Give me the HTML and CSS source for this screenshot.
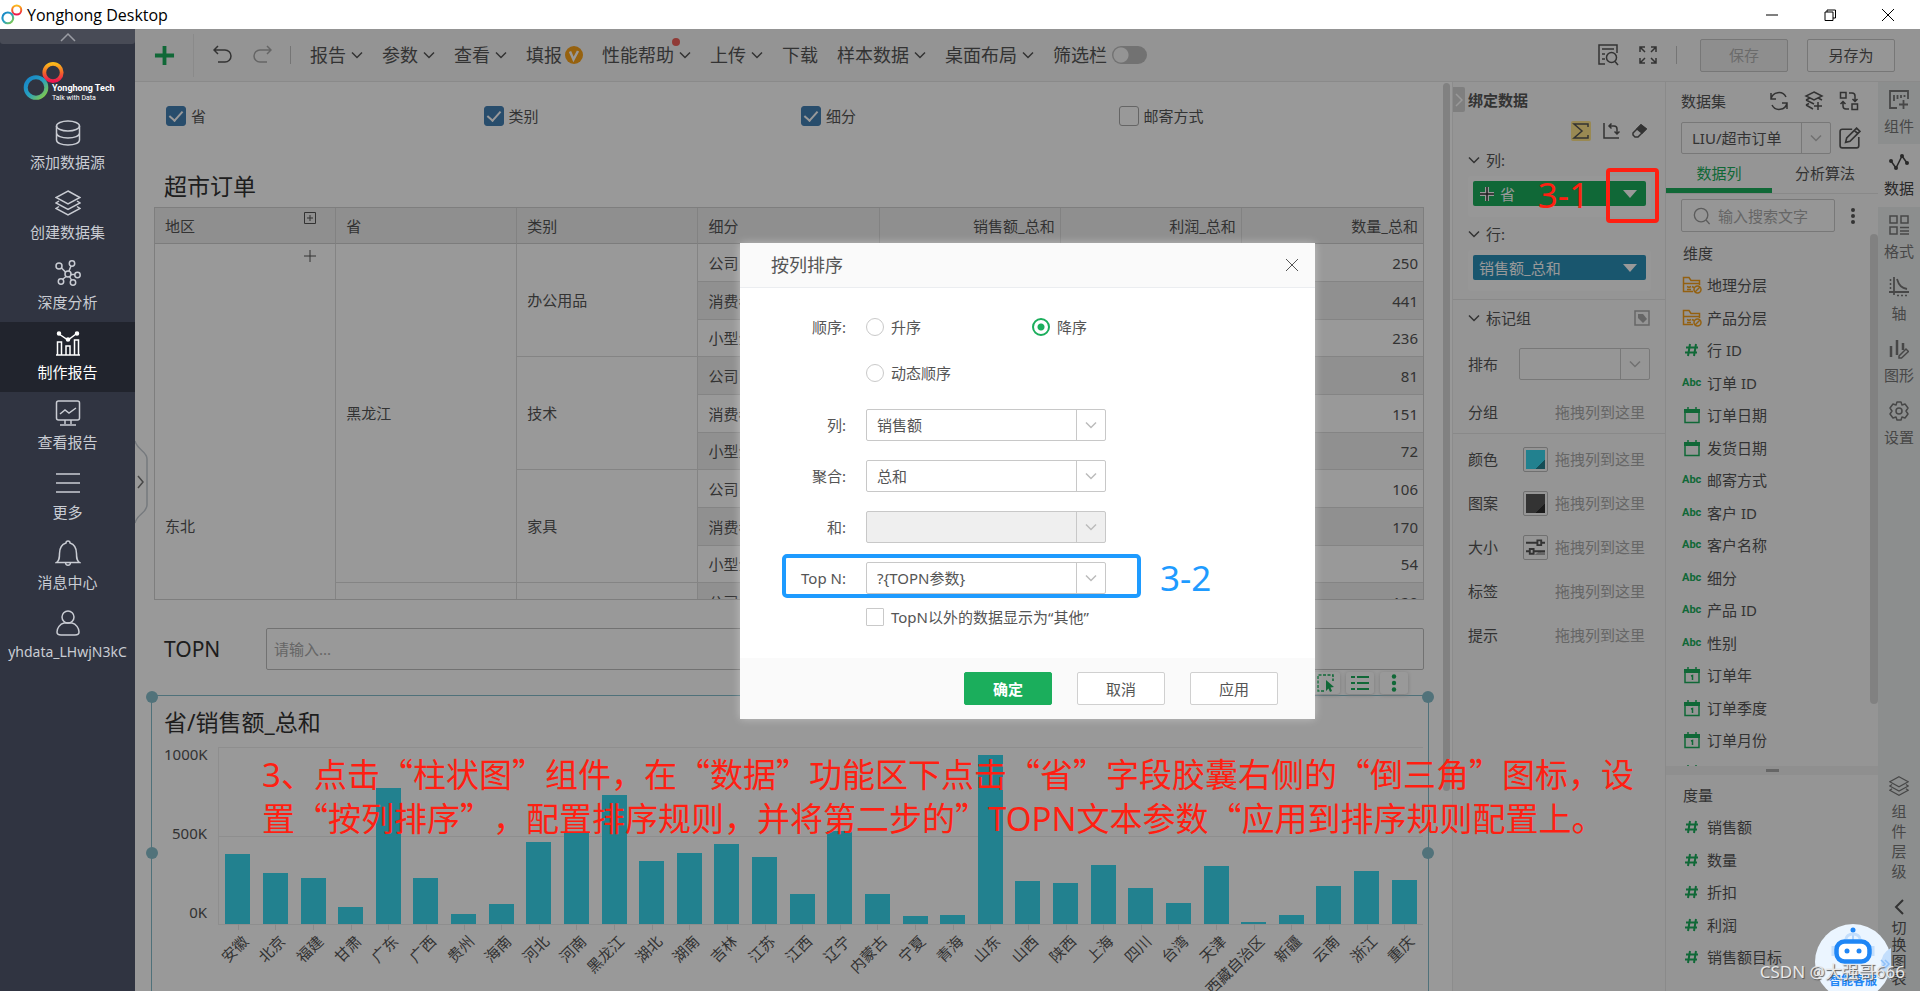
FILE: index.html
```html
<!DOCTYPE html>
<html lang="zh-CN">
<head>
<meta charset="utf-8">
<title>Yonghong Desktop</title>
<link rel="stylesheet" href="styles.css">
</head>
<body>
<svg class="defs" aria-hidden="true">
  <defs>
    <linearGradient id="g-cool" x1="0" y1="0" x2="1" y2="1"><stop offset="0" stop-color="#1583c9"/><stop offset=".5" stop-color="#27a0c0"/><stop offset="1" stop-color="#8fd03a"/></linearGradient>
    <linearGradient id="g-warm" x1="0" y1="0" x2="0" y2="1"><stop offset="0" stop-color="#fbb91a"/><stop offset=".5" stop-color="#f3662a"/><stop offset="1" stop-color="#ee1650"/></linearGradient>
  </defs>
  <symbol id="rings" viewBox="0 0 42 42"><circle cx="30" cy="11.500" r="8.700" stroke="url(#g-warm)" stroke-width="3.800"/><circle cx="13" cy="26.500" r="10.300" stroke="url(#g-cool)" stroke-width="4"/></symbol>
  <symbol id="down" viewBox="0 0 12 12"><path d="M1 3.500l5 5 5-5"/></symbol>
  <symbol id="tri" viewBox="0 0 14 8"><path d="M0 0h14L7 8z" fill="currentColor" stroke="none"/></symbol>
  <symbol id="db" viewBox="0 0 26 26"><ellipse cx="13" cy="6" rx="11.500" ry="5"/><path d="M1.500 6v14c0 3 5 5 11.500 5s11.500-2 11.500-5V6M1.500 13c0 3 5 5 11.500 5s11.500-2 11.500-5"/></symbol>
  <symbol id="layers" viewBox="0 0 26 26"><path d="M13 1l12 6.500-12 6.500L1 7.500zM4 11l-3 2 12 6.500L25 13l-3-2M4 16.500l-3 2L13 25l12-6.500-3-2"/></symbol>
  <symbol id="nodes" viewBox="0 0 26 26"><circle cx="13" cy="14" r="3"/><circle cx="4" cy="6" r="3"/><circle cx="17" cy="3.500" r="2.700"/><circle cx="22.500" cy="15" r="2.700"/><circle cx="6" cy="21.500" r="2.700"/><circle cx="18" cy="22.500" r="2.700"/><path d="M6.500 8l4 4M16 6l-2 5M16 14.500h4M11 16.500l-3.500 3M14.500 16.500l2 3.500"/></symbol>
  <symbol id="report" viewBox="0 0 26 26"><path d="M1 25h24M2.500 25V12h4v13M11 25v-9h4v9M19.500 25V10h4v15" /><path d="M4 4l9 6 8-6"/><g fill="currentColor"><circle cx="4" cy="3.500" r="1.500"/><circle cx="13" cy="9.500" r="1.500"/><circle cx="22" cy="3.500" r="1.500"/></g></symbol>
  <symbol id="monitor" viewBox="0 0 26 26"><rect x="1.500" y="1" width="23" height="19" rx="2"/><path d="M10 20v4M16 20v4M5 25h16M5 14l5-4 4 3 7-5"/></symbol>
  <symbol id="menu" viewBox="0 0 26 26"><path d="M1 4h24M1 13h24M1 22h24"/></symbol>
  <symbol id="bell" viewBox="0 0 26 26"><path d="M1.500 22.500c3-2 3-5 3-9C4.500 7 8 4 11 3a2 2 0 0 1 4 0c3 1 6.500 4 6.500 10.500 0 4 0 7 3 9zM10.500 23c.5 3 4.500 3 5 0"/></symbol>
  <symbol id="user" viewBox="0 0 26 26"><circle cx="13" cy="7" r="6"/><path d="M6 25c-3 0-4-1-4-3 0-4 3-8 7-9h8c4 1 7 5 7 9 0 2-1 3-4 3z"/></symbol>
  <symbol id="undo" viewBox="0 0 20 20"><path d="M5 1L1 5l4 4M1 5h11a6 6 0 0 1 0 12H5"/></symbol>
  <symbol id="redo" viewBox="0 0 20 20"><path d="M15 1l4 4-4 4M19 5H8a6 6 0 0 0 0 12h7"/></symbol>
  <symbol id="preview" viewBox="0 0 22 22"><path d="M8 20H2V1h18v8M5 5h12M5 10h3M5 15h3"/><circle cx="14.500" cy="13.500" r="5"/><path d="M18 17.500l3 3.500"/></symbol>
  <symbol id="full" viewBox="0 0 20 20"><path d="M2 7V2h5M2 2l5 5M13 2h5v5M18 2l-5 5M2 13v5h5M2 18l5-5M13 18h5v-5M18 18l-5-5"/></symbol>
  <symbol id="sync" viewBox="0 0 20 20"><path d="M2 8a8 8 0 0 1 15-2M18 12a8 8 0 0 1-15 2M2 2v6h5M18 18v-6h-5"/></symbol>
  <symbol id="layeradd" viewBox="0 0 20 20"><path d="M10 1l8 4-8 4-8-4zM2 9l8 4M2 9l3-1.500M18 9l-3-1.500M2 14l7 4M2 14l3-1.500M14 11v8M10 15h8"/></symbol>
  <symbol id="swap" viewBox="0 0 20 20"><rect x="1.500" y="1.500" width="5.500" height="5.500"/><rect x="13" y="13" width="5.500" height="5.500"/><path d="M10 2h3q3 0 3 3v5M13.500 8l2.500 2.500L18.500 8M10 18H7q-3 0-3-3v-4M1.500 13L4 10.500 6.500 13"/></symbol>
  <symbol id="edit" viewBox="0 0 20 20"><path d="M12 2H3Q1 2 1 4v13q0 2 2 2h13q2 0 2-2V9M6 14l1-4 9-9 3 3-9 9zM14 3l3 3"/></symbol>
  <symbol id="rotate" viewBox="0 0 18 18"><path d="M2 1v15h15M7 4h5q3 0 3 3v5M9.500 1.500L7 4l2.500 2.500M12.500 9.500L15 12l2.500-2.500"/></symbol>
  <symbol id="eraser" viewBox="0 0 16 16"><path d="M2 10l8-8 5 4-8 8H4l-2-2z"/><path d="M6 6l4-4 5 4-4 4z" fill="currentColor"/></symbol>
  <symbol id="glass" viewBox="0 0 20 20"><circle cx="9" cy="9" r="7.500"/><path d="M14.500 14.500l4 4.500"/></symbol>
  <symbol id="folder" viewBox="0 0 20 18"><path d="M17.500 9V4.500H9L7 1.500H1.500v14H11M1.500 7.500h16M5 10.500l2 1 2-1M5 13.500h4M10 10.500l2 1"/><circle cx="15.500" cy="13.500" r="3.500"/><path d="M13 16l5-5"/></symbol>
  <symbol id="cal" viewBox="0 0 18 18"><path d="M2 5v11.500h14V5"/><path d="M1 3h16v4H1z" fill="currentColor" stroke="none"/><path d="M5 1v3M13 1v3"/></symbol>
  <symbol id="cal1" viewBox="0 0 18 18"><path d="M2 5v11.500h14V5M8 10l1.500-.5V14"/><path d="M1 3h16v4H1z" fill="currentColor" stroke="none"/><path d="M5 1v3M13 1v3"/></symbol>
  <symbol id="hash" viewBox="0 0 14 14"><path d="M5 1L3 13M11 1L9 13M1 4.500h12M0 9.500h12"/></symbol>
  <symbol id="widget" viewBox="0 0 20 20"><path d="M8 18H1V1h18v8M5 5v6M8.500 5v4M12 5v3M15.500 5v2M14.500 10v9M10 14.500h9" stroke-width="1.800"/></symbol>
  <symbol id="line" viewBox="0 0 20 20"><path d="M2 9l5 7 6-12 5 7"/><g fill="currentColor" stroke="none"><circle cx="2" cy="9" r="2"/><circle cx="7" cy="16" r="2"/><circle cx="13" cy="4" r="2"/><circle cx="18" cy="11" r="2"/></g></symbol>
  <symbol id="format" viewBox="0 0 20 20"><path d="M1 1h7v7H1zM12 1h7v7h-7zM1 12h7v7H1zM11 12.500h9M11 16h9M11 19h9"/></symbol>
  <symbol id="axis" viewBox="0 0 20 20"><path d="M5 0v18M0 15h20M8 2c2 7 5 9 10 10" stroke-width="1.800"/><path d="M1.500 2v12M8 18.500h12" stroke-dasharray="2 2"/></symbol>
  <symbol id="shape" viewBox="0 0 20 20"><path d="M2 7v11M8 1v15M14 4v7" stroke-width="2.500"/><path d="M10 17l7-7 2.500 2.500-7 6.500H10z"/></symbol>
  <symbol id="gear" viewBox="0 0 20 20"><circle cx="10" cy="10" r="3"/><path d="M8 1h4l1 3 3-1 3 4-2 3 2 3-3 4-3-1-1 3H8l-1-3-3 1-3-4 2-3-2-3 3-4 3 1z" stroke-linejoin="round"/></symbol>
  <symbol id="sliders" viewBox="0 0 20 20"><path d="M16 15h4v3H9l5-4z" fill="#aaa" stroke="none"/><path d="M0 5h12M16 5h4M12 2.500h4v5h-4zM0 14h4M8 14h12M4 11.500h4v5H4z" stroke-width="2"/></symbol>
</svg>

<header class="titlebar">
  <svg class="app-mark"><use href="#rings"/></svg>
  <span class="app-name">Yonghong Desktop</span>
  <div class="window-buttons">
    <button aria-label="最小化"><svg class="i12" viewBox="0 0 12 12"><path d="M0 6h12"/></svg></button>
    <button aria-label="还原"><svg class="i12" viewBox="0 0 12 12"><path d="M1 3h8v8.500H1zM3 3V1h8.500v8H9"/></svg></button>
    <button aria-label="关闭"><svg class="i12" viewBox="0 0 12 12"><path d="M0 0l12 12M12 0L0 12"/></svg></button>
  </div>
</header>

<div class="app">
  <nav class="sidebar">
    <button class="side-up" aria-label="收起"><svg class="i16" viewBox="0 0 16 10"><path d="M1 9l7-7 7 7"/></svg></button>
    <div class="brand">
      <svg class="brand-mark"><use href="#rings"/></svg>
      <div class="brand-text"><b>Yonghong Tech</b><span>Talk with Data</span></div>
    </div>
    <a class="side-item" href="#"><svg><use href="#db"/></svg>添加数据源</a>
    <a class="side-item" href="#"><svg><use href="#layers"/></svg>创建数据集</a>
    <a class="side-item" href="#"><svg><use href="#nodes"/></svg>深度分析</a>
    <a class="side-item active" href="#"><svg><use href="#report"/></svg>制作报告</a>
    <a class="side-item" href="#"><svg><use href="#monitor"/></svg>查看报告</a>
    <a class="side-item" href="#"><svg><use href="#menu"/></svg>更多</a>
    <a class="side-item" href="#"><svg><use href="#bell"/></svg>消息中心</a>
    <a class="side-item account" href="#"><svg><use href="#user"/></svg>yhdata_LHwjN3kC</a>
  </nav>

  <div class="workspace">
    <div class="toolbar">
      <button class="add" aria-label="新建"><svg viewBox="0 0 22 22"><path d="M11 1v20M1 11h20"/></svg></button>
      <button class="hist" aria-label="撤销"><svg class="i20"><use href="#undo"/></svg></button>
      <button class="hist off" aria-label="重做"><svg class="i20"><use href="#redo"/></svg></button>
      <span class="sep"></span>
      <div class="menus">
        <button>报告<svg class="i12"><use href="#down"/></svg></button>
        <button>参数<svg class="i12"><use href="#down"/></svg></button>
        <button>查看<svg class="i12"><use href="#down"/></svg></button>
        <button class="tight">填报<svg class="vip" viewBox="0 0 18 18"><circle cx="9" cy="9" r="9" fill="#fba31a" stroke="none"/><path d="M5 5.500l3.500 8L13 5" stroke="#fff" stroke-width="2.500"/></svg></button>
        <button class="dotted">性能帮助<svg class="i12"><use href="#down"/></svg></button>
        <button>上传<svg class="i12"><use href="#down"/></svg></button>
        <button>下载</button>
        <button>样本数据<svg class="i12"><use href="#down"/></svg></button>
        <button>桌面布局<svg class="i12"><use href="#down"/></svg></button>
        <label class="filter-bar">筛选栏<input type="checkbox" class="switch"></label>
      </div>
      <button class="tool" aria-label="预览"><svg class="i22"><use href="#preview"/></svg></button>
      <button class="tool" aria-label="全屏"><svg class="i20"><use href="#full"/></svg></button>
      <span class="sep"></span>
      <button class="box-btn save" disabled>保存</button>
      <button class="box-btn">另存为</button>
    </div>

    <div class="content">
      <main class="canvas">
        <div class="filters">
          <label><input type="checkbox" class="tick" checked>省</label>
          <label><input type="checkbox" class="tick" checked>类别</label>
          <label><input type="checkbox" class="tick" checked>细分</label>
          <label><input type="checkbox" class="tick">邮寄方式</label>
        </div>
        <h2 class="block-title">超市订单</h2>
        <div class="table-wrap">
          <table class="orders">
            <thead><tr>
              <th><div class="split">地区<svg class="i12 expand" viewBox="0 0 12 12"><path d="M.5.500h11v11H.500zM6 3v6M3 6h6"/></svg></div></th>
              <th>省</th><th>类别</th><th>细分</th><th class="num">销售额_总和</th><th class="num">利润_总和</th><th class="num">数量_总和</th>
            </tr></thead>
            <tbody>
              <tr><td rowspan="15" class="region"><svg class="i12 plus" viewBox="0 0 12 12"><path d="M6 0v12M0 6h12"/></svg>东北</td><td rowspan="9">黑龙江</td><td rowspan="3">办公用品</td><td>公司</td><td></td><td></td><td class="num">250</td></tr>
              <tr class="alt"><td>消费者</td><td></td><td></td><td class="num">441</td></tr>
              <tr><td>小型企业</td><td></td><td></td><td class="num">236</td></tr>
              <tr class="alt"><td rowspan="3" class="plain">技术</td><td>公司</td><td></td><td></td><td class="num">81</td></tr>
              <tr><td>消费者</td><td></td><td></td><td class="num">151</td></tr>
              <tr class="alt"><td>小型企业</td><td></td><td></td><td class="num">72</td></tr>
              <tr><td rowspan="3">家具</td><td>公司</td><td></td><td></td><td class="num">106</td></tr>
              <tr class="alt"><td>消费者</td><td></td><td></td><td class="num">170</td></tr>
              <tr><td>小型企业</td><td></td><td></td><td class="num">54</td></tr>
              <tr class="alt"><td rowspan="6" class="plain"></td><td rowspan="3" class="plain"></td><td>公司</td><td></td><td></td><td class="num">120</td></tr>
              <tr><td></td><td></td><td></td><td></td></tr>
              <tr><td></td><td></td><td></td><td></td></tr>
              <tr><td rowspan="3"></td><td></td><td></td><td></td><td></td></tr>
              <tr><td></td><td></td><td></td><td></td></tr>
              <tr><td></td><td></td><td></td><td></td></tr>
            </tbody>
          </table>
        </div>
        <div class="param">
          <label for="topn">TOPN</label>
          <input id="topn" type="text" placeholder="请输入...">
        </div>
        <section class="chart">
          <i class="knob tl"></i><i class="knob tr"></i><i class="knob ml"></i><i class="knob mr"></i>
          <div class="chart-tools">
            <button aria-label="选择"><svg class="i18" viewBox="0 0 18 18"><path d="M7 17H1V1h15v6" stroke-dasharray="3 1.500"/><path d="M9 6l8 7-3.500.5L15 17l-2 1-1.500-3.500L9 17z" fill="currentColor" stroke="none"/></svg></button>
            <button aria-label="列表"><svg class="i18" viewBox="0 0 18 18"><path d="M0 3h4M6 3h12M0 9h4M6 9h12M0 15h4M6 15h12" stroke-width="2"/></svg></button>
            <button aria-label="更多"><svg class="i18" viewBox="0 0 18 18"><g fill="currentColor" stroke="none"><circle cx="9" cy="2.500" r="2.200"/><circle cx="9" cy="9" r="2.200"/><circle cx="9" cy="15.500" r="2.200"/></g></svg></button>
          </div>
          <h2 class="block-title">省/销售额_总和</h2>
          <div class="plot-row">
            <div class="y-axis"><span>1000K</span><span>500K</span><span>0K</span></div>
            <div class="plot">
              <div class="col"><i style="height:70px"></i><span>安徽</span></div>
              <div class="col"><i style="height:51px"></i><span>北京</span></div>
              <div class="col"><i style="height:46px"></i><span>福建</span></div>
              <div class="col"><i style="height:17px"></i><span>甘肃</span></div>
              <div class="col"><i style="height:136px"></i><span>广东</span></div>
              <div class="col"><i style="height:46px"></i><span>广西</span></div>
              <div class="col"><i style="height:10px"></i><span>贵州</span></div>
              <div class="col"><i style="height:20px"></i><span>海南</span></div>
              <div class="col"><i style="height:82px"></i><span>河北</span></div>
              <div class="col"><i style="height:92px"></i><span>河南</span></div>
              <div class="col"><i style="height:129px"></i><span>黑龙江</span></div>
              <div class="col"><i style="height:63px"></i><span>湖北</span></div>
              <div class="col"><i style="height:71px"></i><span>湖南</span></div>
              <div class="col"><i style="height:80px"></i><span>吉林</span></div>
              <div class="col"><i style="height:67px"></i><span>江苏</span></div>
              <div class="col"><i style="height:30px"></i><span>江西</span></div>
              <div class="col"><i style="height:93px"></i><span>辽宁</span></div>
              <div class="col"><i style="height:30px"></i><span>内蒙古</span></div>
              <div class="col"><i style="height:8px"></i><span>宁夏</span></div>
              <div class="col"><i style="height:9px"></i><span>青海</span></div>
              <div class="col"><i style="height:169px"></i><span>山东</span></div>
              <div class="col"><i style="height:43px"></i><span>山西</span></div>
              <div class="col"><i style="height:41px"></i><span>陕西</span></div>
              <div class="col"><i style="height:59px"></i><span>上海</span></div>
              <div class="col"><i style="height:36px"></i><span>四川</span></div>
              <div class="col"><i style="height:21px"></i><span>台湾</span></div>
              <div class="col"><i style="height:58px"></i><span>天津</span></div>
              <div class="col"><i style="height:2px"></i><span>西藏自治区</span></div>
              <div class="col"><i style="height:9px"></i><span>新疆</span></div>
              <div class="col"><i style="height:38px"></i><span>云南</span></div>
              <div class="col"><i style="height:53px"></i><span>浙江</span></div>
              <div class="col"><i style="height:44px"></i><span>重庆</span></div>
            </div>
          </div>
        </section>
        <svg class="drawer" viewBox="0 0 14 84"><path d="M0 1c2 9 12 10 12 18v46c0 8-10 9-12 18" stroke="#c5cbd2"/><path d="M3 36l5 6-5 6" stroke="#777"/></svg>
        <div class="canvas-scroll"></div>
      </main>

      <aside class="binding">
        <button class="fold" aria-label="折叠"><svg viewBox="0 0 8 14"><path d="M1 1l6 6-6 6"/></svg></button>
        <h3>绑定数据</h3>
        <div class="bind-tools">
          <button class="sigma" aria-label="汇总"><svg class="i18" viewBox="0 0 18 18"><path d="M16 5V2H2l8 7-8 7h14v-3"/></svg></button>
          <button aria-label="转置"><svg class="i18"><use href="#rotate"/></svg></button>
          <button aria-label="清除"><svg class="i16"><use href="#eraser"/></svg></button>
        </div>
        <div class="group"><svg class="i12"><use href="#down"/></svg>列:</div>
        <div class="drop"><button class="pill dim"><svg class="i16" viewBox="0 0 16 16"><path d="M8 1v14M1 8h14" stroke="#fff" stroke-width="4"/><path d="M8 1v14M1 8h14" stroke="#333" stroke-width="1.500"/></svg><span>省</span><svg class="tri"><use href="#tri"/></svg></button></div>
        <div class="group"><svg class="i12"><use href="#down"/></svg>行:</div>
        <div class="drop"><button class="pill mea"><span>销售额_总和</span><svg class="tri"><use href="#tri"/></svg></button></div>
        <div class="mark-head"><svg class="i12"><use href="#down"/></svg>标记组<svg class="i16 tag" viewBox="0 0 16 16"><path d="M1 1h14v14H1z"/><path d="M4 4h5l4 5-4 4-5-5z" fill="currentColor" stroke="none"/></svg></div>
        <div class="mark"><label for="arrange">排布</label><div class="combo arrange"><select id="arrange"><option></option></select><span class="caret"><svg class="i12"><use href="#down"/></svg></span></div></div>
        <div class="mark last"><span>分组</span><em>拖拽列到这里</em></div>
        <div class="mark"><span>颜色</span><button class="swatch teal" aria-label="颜色"></button><em>拖拽列到这里</em></div>
        <div class="mark"><span>图案</span><button class="swatch dark" aria-label="图案"></button><em>拖拽列到这里</em></div>
        <div class="mark"><span>大小</span><button class="swatch" aria-label="大小"><svg><use href="#sliders"/></svg></button><em>拖拽列到这里</em></div>
        <div class="mark"><span>标签</span><em>拖拽列到这里</em></div>
        <div class="mark"><span>提示</span><em>拖拽列到这里</em></div>
      </aside>

      <aside class="dataset">
        <div class="ds-head"><span>数据集</span>
          <button aria-label="刷新"><svg class="i20"><use href="#sync"/></svg></button>
          <button aria-label="新建数据集"><svg class="i20"><use href="#layeradd"/></svg></button>
          <button aria-label="切换"><svg class="i20"><use href="#swap"/></svg></button>
        </div>
        <div class="ds-pick">
          <div class="combo"><select aria-label="数据集"><option>LIU/超市订单</option></select><span class="caret"><svg class="i12"><use href="#down"/></svg></span></div>
          <button aria-label="编辑"><svg class="i22"><use href="#edit"/></svg></button>
        </div>
        <div class="ds-tabs"><button class="on">数据列</button><button>分析算法</button></div>
        <div class="ds-search">
          <label><svg class="i18"><use href="#glass"/></svg><input type="text" placeholder="输入搜索文字"></label>
          <button aria-label="更多"><svg class="dots" viewBox="0 0 4 16"><g fill="currentColor" stroke="none"><circle cx="2" cy="2" r="2"/><circle cx="2" cy="8" r="2"/><circle cx="2" cy="14" r="2"/></g></svg></button>
        </div>
        <div class="fields dims">
          <h4>维度</h4>
          <ul>
            <li><svg class="orange"><use href="#folder"/></svg>地理分层</li>
            <li><svg class="orange"><use href="#folder"/></svg>产品分层</li>
            <li><svg class="hash"><use href="#hash"/></svg>行 ID</li>
            <li><b>Abc</b>订单 ID</li>
            <li><svg><use href="#cal"/></svg>订单日期</li>
            <li><svg><use href="#cal"/></svg>发货日期</li>
            <li><b>Abc</b>邮寄方式</li>
            <li><b>Abc</b>客户 ID</li>
            <li><b>Abc</b>客户名称</li>
            <li><b>Abc</b>细分</li>
            <li><b>Abc</b>产品 ID</li>
            <li><b>Abc</b>性别</li>
            <li><svg><use href="#cal1"/></svg>订单年</li>
            <li><svg><use href="#cal1"/></svg>订单季度</li>
            <li><svg><use href="#cal1"/></svg>订单月份</li>
            <li><svg><use href="#cal1"/></svg></li>
          </ul>
          <div class="list-scroll"></div>
        </div>
        <div class="grip"></div>
        <div class="fields meas">
          <h4>度量</h4>
          <ul>
            <li><svg class="hash"><use href="#hash"/></svg>销售额</li>
            <li><svg class="hash"><use href="#hash"/></svg>数量</li>
            <li><svg class="hash"><use href="#hash"/></svg>折扣</li>
            <li><svg class="hash"><use href="#hash"/></svg>利润</li>
            <li><svg class="hash"><use href="#hash"/></svg>销售额目标</li>
          </ul>
        </div>
      </aside>

      <nav class="rail">
        <button><svg class="i20"><use href="#widget"/></svg>组件</button>
        <button class="on"><svg class="i20"><use href="#line"/></svg>数据</button>
        <button><svg class="i20"><use href="#format"/></svg>格式</button>
        <button><svg class="i20"><use href="#axis"/></svg>轴</button>
        <button><svg class="i20"><use href="#shape"/></svg>图形</button>
        <button><svg class="i20"><use href="#gear"/></svg>设置</button>
        <button class="tall first"><svg class="i20"><use href="#layers"/></svg><span>组件层级</span></button>
        <button class="tall second"><svg class="i16" viewBox="0 0 16 16"><path d="M12 1L5 8l7 7" stroke-width="2"/></svg><span>切换图表</span></button>
      </nav>
    </div>

    <div class="overlay">
      <form class="dialog" role="dialog" aria-label="按列排序">
        <header><h3>按列排序</h3><button type="button" aria-label="关闭"><svg class="i12" viewBox="0 0 12 12"><path d="M0 0l12 12M12 0L0 12"/></svg></button></header>
        <div class="dlg-body">
          <div class="radio-row"><span class="cap">顺序:</span><label><input type="radio" name="order">升序</label><label><input type="radio" name="order" checked>降序</label></div>
          <div class="radio-row"><span class="cap"></span><label><input type="radio" name="order">动态顺序</label></div>
          <div class="field first"><label class="cap" for="f-col">列:</label><div class="combo"><select id="f-col"><option>销售额</option></select><span class="caret"><svg class="i12"><use href="#down"/></svg></span></div></div>
          <div class="field"><label class="cap" for="f-agg">聚合:</label><div class="combo"><select id="f-agg"><option>总和</option></select><span class="caret"><svg class="i12"><use href="#down"/></svg></span></div></div>
          <div class="field"><label class="cap" for="f-and">和:</label><div class="combo off"><select id="f-and" disabled><option></option></select><span class="caret"><svg class="i12"><use href="#down"/></svg></span></div></div>
          <div class="field marked"><label class="cap" for="f-top">Top N:</label><div class="combo"><select id="f-top"><option>?{TOPN参数}</option></select><span class="caret"><svg class="i12"><use href="#down"/></svg></span></div><span class="note blue">3-2</span></div>
          <div class="check-row"><label><input type="checkbox">TopN以外的数据显示为“其他”</label></div>
        </div>
        <footer><button type="button" class="ok">确定</button><button type="button">取消</button><button type="button">应用</button></footer>
      </form>
    </div>
  </div>
</div>

<span class="note red">3-1</span>
<div class="red-frame"></div>
<p class="guide"><span>3</span>、点击“柱状图”组件，在“数据”功能区下点击“省”字段胶囊右侧的“倒三角”图标，设<br>置“按列排序”，配置排序规则，并将第二步的”<span>TOPN</span>文本参数“应用到排序规则配置上。</p>

<button class="robot" aria-label="智能客服">
  <svg viewBox="0 0 76 76">
    <circle cx="38" cy="38" r="38" fill="#ebf5ff" stroke="none"/>
    <path d="M76 24a18 18 0 0 0 0 32z" fill="#c3defc" stroke="none"/>
    <path d="M66 36l4 4-4 4M70 36l4 4-4 4" stroke="#8fc0f8"/>
    <path d="M38 8v8" stroke="#9cc8fb"/><circle cx="38" cy="6" r="2.500" fill="#1f86f5" stroke="none"/>
    <path d="M31 15a7 5 0 0 1 14 0M18 22v10M58 22v10" stroke="#c3defc" stroke-width="3"/>
    <rect x="21.500" y="17.500" width="33" height="20" rx="8" fill="#fff" stroke="#1f86f5" stroke-width="4.500"/>
    <circle cx="32" cy="27" r="2.500" fill="#1f86f5" stroke="none"/><circle cx="44" cy="27" r="2.500" fill="#1f86f5" stroke="none"/>
  </svg>
  <span>智能客服</span>
</button>
<div class="watermark">CSDN @大强哥666</div>
</body>
</html>
```
FILE: styles.css
```css
*, *::before, *::after { box-sizing: border-box; margin: 0; padding: 0; }

body {
  height: 100vh;
  display: flex;
  flex-direction: column;
  overflow: hidden;
  position: relative;
  font: 15px/20px "Noto Sans", "Noto Sans CJK SC", sans-serif;
  color: #555;
}

button, input, select { font: inherit; color: inherit; }
button { background: none; border: 0; }
a { color: inherit; text-decoration: none; }
ul { list-style: none; }
em, i { font-style: normal; }
h2, h3, h4 { font-weight: normal; }
svg { fill: none; stroke: currentColor; stroke-width: 1.5; flex: none; display: block; }
.defs { position: absolute; width: 0; height: 0; }
.i12 { width: 12px; height: 12px; }
.i16 { width: 16px; height: 16px; }
.i18 { width: 18px; height: 18px; }
.i20 { width: 20px; height: 20px; }
.i22 { width: 22px; height: 22px; }

/* window title */
.titlebar { height: 29px; flex: none; display: flex; align-items: center; background: #fff; color: #000; padding-left: 1px; }
.app-mark { width: 22px; height: 22px; }
.app-name { font-size: 16px; font-family: "Open Sans", sans-serif; margin-left: 4px; }
.window-buttons { margin-left: auto; display: flex; }
.window-buttons button { width: 58px; height: 28px; display: grid; place-items: center; }
.window-buttons svg { stroke-width: 1; }
.window-buttons button:last-child { margin-right: 3px; }

.app { flex: 1; min-height: 0; display: flex; }

/* left navigation */
.sidebar { width: 135px; flex: none; background: #303441; color: #c9ccd3; }
.side-up { width: 100%; height: 15px; background: #484b56; border-radius: 0 0 3px 3px; display: grid; place-items: center; color: #9a9ca3; }
.side-up svg { height: 10px; }
.brand { height: 68px; padding: 17px 0 0 23px; display: flex; }
.brand-mark { width: 42px; height: 42px; }
.brand-text { margin: 22px 0 0 -13px; display: flex; flex-direction: column; color: #fff; white-space: nowrap; font-family: Roboto, sans-serif; }
.brand-text b { font-size: 9px; line-height: 11px; }
.brand-text span { font-size: 7px; line-height: 9px; }
.side-item { height: 70px; padding-top: 8px; display: flex; flex-direction: column; align-items: center; gap: 5px; line-height: 22px; }
.side-item svg { width: 26px; height: 26px; }
.side-item.active { background: #21242d; color: #fff; }
.account { font-size: 14px; }

.workspace { flex: 1; min-width: 0; display: flex; flex-direction: column; position: relative; background: #fff; }

/* toolbar */
.toolbar { height: 53px; flex: none; display: flex; align-items: center; background: #f7f7f7; border-bottom: 1px solid #e6e6e6; padding-right: 25px; }
.add { width: 59px; height: 43px; display: grid; place-items: center; color: #1bae5c; border-right: 1px solid #e6e6e6; }
.add svg { width: 21px; height: 21px; stroke-width: 4; }
.hist { margin-left: 19px; }
.hist.off { color: #a9a9a9; }
.sep { width: 1px; height: 18px; background: #c4c4c4; margin: 0 19px 0 18px; }
.menus { flex: 1; display: flex; align-items: center; gap: 19px; font-size: 18px; line-height: 26px; white-space: nowrap; }
.menus button, .filter-bar { display: flex; align-items: center; gap: 5px; position: relative; }
.menus .tight { gap: 3px; }
.vip { width: 18px; height: 18px; }
.dotted::after { content: ""; position: absolute; top: -4px; right: 11px; width: 8px; height: 8px; border-radius: 50%; background: #f0625a; }
.switch { appearance: none; width: 35px; height: 18px; border-radius: 9px; background: radial-gradient(circle at 9px 9px, #f7f7f7 7px, transparent 8px), #bfbfbf; }
.tool { margin-left: 19px; }
.box-btn { width: 88px; height: 33px; border: 1px solid #c6c6c6; border-radius: 2px; background: #fbfbfb; }
.box-btn.save { background: #ededed; color: #b3b3b3; margin: 0 19px 0 4px; }

.content { flex: 1; min-height: 0; display: flex; overflow: hidden; }

/* report canvas */
.canvas { flex: 1; min-width: 0; position: relative; padding: 22px 28px 0 19px; background: #fff; overflow: hidden; }
.canvas-scroll { position: absolute; top: 1px; right: 2px; width: 7px; height: 708px; border-radius: 4px; background: #d8d8d8; }
.drawer { position: absolute; left: 0; top: 358px; width: 14px; height: 84px; }
.filters { display: grid; grid-template-columns: repeat(4, 1fr); line-height: 24px; }
.filters label { display: flex; align-items: center; gap: 5px; padding-left: 12px; }
.tick { appearance: none; width: 20px; height: 20px; border: 1px solid #a8a8a8; border-radius: 3px; position: relative; }
.tick:checked { background: #4480b5; border-color: #4480b5; }
.tick:checked::after { content: ""; position: absolute; left: 5px; top: 1px; width: 8px; height: 13px; border: solid #fff; border-width: 0 2px 2px 0; transform: rotate(42deg); }
.block-title { font-size: 23px; line-height: 32px; padding-left: 10px; color: #333; }
.canvas > .block-title { margin: 42px 0 5px; }
.table-wrap { height: 393px; overflow: hidden; border: 1px solid #d2d2d2; }
.orders { width: 100%; table-layout: fixed; border-collapse: separate; border-spacing: 0; }
.orders th { height: 36px; font-weight: normal; text-align: left; background: #eee; padding: 0 10px; border-right: 1px solid #d9d9d9; border-bottom: 1px solid #cfcfcf; }
.orders td { height: 38px; padding: 0 10px; border-right: 1px solid #dcdcdc; border-bottom: 1px solid #dcdcdc; position: relative; }
.orders th:last-child, .orders td:last-child { border-right: 0; }
.orders tbody tr:nth-child(3n) td:not([rowspan]) { height: 37px; }
.alt td { background: #f1f1f1; }
.alt .plain { background: #fff; }
.orders .num { text-align: right; padding-right: 5px; }
.split { display: flex; justify-content: space-between; align-items: center; }
.expand { margin: 0 9px 16px 0; stroke-width: 1; }
.plus { position: absolute; top: 6px; right: 19px; stroke-width: 1; }
.param { display: grid; grid-template-columns: 102px 1fr; align-items: center; margin: 28px 0 25px; padding-left: 10px; }
.param label { font-size: 21px; color: #333; }
.param input { height: 42px; border: 1px solid #bfbfbf; border-radius: 2px; padding-left: 7px; background: #fff; min-width: 0; }
::placeholder { color: #aaa; opacity: 1; }

/* chart */
.chart { position: relative; height: 400px; margin: 0 -5px 0 -3px; border: 1px solid #84bccb; padding: 10px 5px 0 2px; }
.chart .block-title { margin-bottom: 9px; }
.knob { position: absolute; width: 12px; height: 12px; border-radius: 50%; background: #87bfcc; }
.tl { left: -6px; top: -5px; }
.tr { right: -6px; top: -5px; }
.ml { left: -6px; top: 151px; }
.mr { right: -6px; top: 151px; }
.chart-tools { position: absolute; right: 20px; top: -24px; display: flex; gap: 6px; color: #1bae5c; }
.chart-tools button { width: 28px; height: 22px; border-radius: 3px; background: #fff; box-shadow: 0 1px 4px #ccc; display: grid; place-items: center; }
.plot-row { display: flex; height: 178px; padding-left: 10px; }
.y-axis { width: 43px; display: flex; flex-direction: column; justify-content: space-between; text-align: right; margin: -3px 11px 3px 0; }
.plot { flex: 1; display: flex; border: 1px solid #ededed; border-right: 0; background: linear-gradient(#ededed, #ededed) 0 50% / 100% 1px no-repeat; }
.col { flex: 1; position: relative; display: flex; align-items: flex-end; justify-content: center; }
.col i { width: 25px; background: #39d7ee; }
.col::after { content: ""; position: absolute; left: 50%; top: 100%; width: 1px; height: 6px; background: #e6e6e6; }
.col span { position: absolute; right: 50%; top: 183px; white-space: nowrap; transform: rotate(-45deg); transform-origin: 100% 0; }

/* field binding */
.binding { width: 213px; flex: none; position: relative; background: #f8f8f8; border-left: 1px solid #eaeaea; padding: 0 15px; }
.binding h3 { line-height: 37px; font-size: 15px; font-weight: bold; }
.fold { position: absolute; left: 0; top: 5px; width: 12px; height: 25px; background: #d4d4d4; color: #fff; display: grid; place-items: center; border-radius: 0 2px 2px 0; }
.fold svg { width: 8px; height: 14px; }
.bind-tools { height: 24px; display: flex; justify-content: flex-end; align-items: center; gap: 11px; padding-right: 3px; }
.sigma { background: #ffe48a; padding: 1px; border-radius: 2px; }
.group { display: flex; align-items: center; gap: 6px; line-height: 26px; margin-top: 4px; }
.drop { margin-top: 3px; background: #fcfcfc; padding: 5px; height: 41px; border-radius: 2px; margin-right: -1px; }
.pill { width: 100%; height: 25px; border-radius: 2px; color: #fff; display: flex; align-items: center; padding: 0 9px 0 6px; gap: 5px; }
.pill .tri { width: 14px; height: 8px; margin-left: auto; }
.dim { background: #1bae5c; }
.mea { background: #2a8fb8; }
.mark-head { display: flex; align-items: center; gap: 6px; height: 37px; margin: 8px -15px 0; padding: 0 15px; border-top: 1px solid #e4e4e4; }
.tag { margin-left: auto; color: #aaa; }
.mark { height: 44px; display: flex; align-items: center; }
.mark-head + .mark { margin: 6px 0 4px; }
.mark em { margin-left: auto; color: #aaa; padding-right: 5px; }
.mark.last { margin: 0 -15px 3px; padding: 0 15px; border-bottom: 1px solid #e4e4e4; }
.swatch { width: 25px; height: 25px; border: 1px solid #bbb; border-radius: 2px; padding: 2px; margin-left: 25px; }
.swatch svg { width: 19px; height: 19px; }
.teal { background: linear-gradient(135deg, #39d7ee 74%, #22818f 75%) content-box; }
.dark { background: linear-gradient(135deg, #555 74%, #2c2c2c 75%) content-box; }

.combo { display: flex; border: 1px solid #c8c8c8; border-radius: 2px; background: #fff; height: 32px; }
.combo select { flex: 1; min-width: 0; appearance: none; border: 0; background: none; padding-left: 10px; opacity: 1; }
.caret { width: 29px; border-left: 1px solid #c8c8c8; display: grid; place-items: center; color: #bbb; }
.combo.off { background: #efefef; }
.arrange { width: 131px; margin-left: auto; background: #fafafa; }

/* dataset */
.dataset { width: 213px; flex: none; background: #f8f8f8; border-left: 1px solid #e6e6e6; display: flex; flex-direction: column; }
.ds-head { height: 37px; display: flex; align-items: center; padding: 0 19px 0 15px; gap: 15px; }
.ds-head span { margin-right: auto; }
.ds-pick { margin-top: 3px; padding: 0 17px 0 15px; display: flex; align-items: center; justify-content: space-between; }
.ds-pick .combo { width: 150px; background: #fafafa; }
.ds-tabs { height: 40px; display: flex; border-bottom: 1px solid #e4e4e4; }
.ds-tabs button { flex: 1; padding-bottom: 2px; }
.ds-tabs .on { color: #1bae5c; border-bottom: 5px solid #1bae5c; padding: 3px 0 0; }
.ds-search { margin-top: 5px; padding: 0 23px 0 15px; display: flex; justify-content: space-between; align-items: center; }
.ds-search label { width: 154px; height: 33px; border: 1px solid #c8c8c8; border-radius: 2px; display: flex; align-items: center; gap: 7px; padding-left: 11px; color: #999; background: #fafafa; }
.ds-search input { border: 0; background: none; min-width: 0; width: 100%; }
.dots { width: 4px; height: 16px; }
.fields { min-height: 0; overflow: hidden; position: relative; padding-left: 16px; flex-basis: 0; }
.dims { flex-grow: 5; padding-top: 5px; }
.meas { flex-grow: 2; padding-top: 4px; }
.fields h4 { font-size: 15px; line-height: 32px; padding-left: 1px; }
.fields li { height: 32px; display: grid; grid-template-columns: 20px 1fr; align-items: center; gap: 5px; }
.fields li:nth-child(even) { height: 33px; }
.fields li svg { width: 18px; height: 18px; color: #1bae5c; justify-self: center; }
.fields li .hash { width: 14px; height: 14px; stroke-width: 2; }
.fields li .orange { width: 20px; color: #f5a11c; }
.fields li b { font: bold 11px/20px Roboto, sans-serif; color: #1bae5c; }
.list-scroll { position: absolute; right: 0; top: 2px; width: 8px; height: 470px; border-radius: 4px; background: #d8d8d8; }
.grip { height: 9px; flex: none; background: linear-gradient(#aaa, #aaa) 50% 50% / 13px 3px no-repeat, #eee; }

/* right rail */
.rail { width: 42px; flex: none; background: #e9eded; display: flex; flex-direction: column; color: #777; }
.rail button { height: 62px; display: flex; flex-direction: column; align-items: center; gap: 6px; padding-top: 8px; flex: none; }
.rail .on { background: #f8f8f8; color: #444; height: 63px; }
.rail .tall { height: auto; padding: 0; gap: 5px; }
.rail .tall span { width: 16px; }
.rail .first { margin-top: auto; }
.rail .second { margin: 18px 0 4px; color: #555; gap: 4px; }
.rail .second span { line-height: 17px; }

/* sort dialog */
.overlay { position: absolute; inset: 0; background: rgba(0, 0, 0, .4); display: flex; justify-content: center; align-items: flex-start; padding-top: 214px; }
.dialog { width: 575px; background: #fff; box-shadow: 0 0 8px rgba(255, 255, 255, .4); border-radius: 2px; }
.dialog header { height: 45px; display: flex; justify-content: space-between; align-items: center; padding: 0 17px 0 31px; background: #fafafa; border-bottom: 1px solid #ebedf0; }
.dialog h3 { font-size: 18px; }
.dialog header svg { stroke-width: 1; }
.dlg-body { padding: 16px 0 27px; }
.cap { width: 106px; text-align: right; margin-right: 20px; flex: none; }
.radio-row { height: 46px; display: flex; align-items: center; }
.radio-row label { width: 166px; display: flex; align-items: center; gap: 7px; }
.dialog input { appearance: none; width: 18px; height: 18px; border: 1px solid #c9c9c9; background: #fff; }
.dialog input[type="radio"] { border-radius: 50%; }
.dialog input[type="radio"]:checked { border: 2px solid #1bae5c; background: radial-gradient(circle, #1bae5c 3px, #fff 4px); }
.dialog input[type="checkbox"] { border-radius: 1px; }
.field { height: 51px; display: flex; align-items: center; position: relative; }
.field.first { margin-top: 3px; }
.field .combo { width: 240px; }
.marked::after { content: ""; position: absolute; left: 42px; top: 2px; width: 359px; height: 44px; border: 4px solid #1e9bff; border-radius: 5px; }
.check-row { height: 28px; padding-left: 126px; display: flex; align-items: center; }
.check-row label { display: flex; align-items: center; gap: 7px; }
.dialog footer { height: 61px; display: flex; justify-content: flex-end; align-items: center; gap: 25px; padding-right: 37px; background: #fafafa; }
.dialog footer button { width: 88px; height: 33px; border: 1px solid #d0d0d0; border-radius: 2px; background: #fff; }
.dialog footer .ok { background: #1bae5c; border-color: #1bae5c; color: #fff; font-weight: bold; }

/* tutorial marks over the window */
.note { font: 35px/40px "Noto Sans", sans-serif; position: absolute; }
.blue { color: #1e9bff; left: 420px; }
.red { color: #ff1f12; right: 331px; top: 175px; }
.red-frame { position: absolute; right: 261px; top: 168px; width: 53px; height: 55px; border: 4px solid #ff1f12; border-radius: 4px; }
.guide { position: absolute; left: 262px; top: 752px; font: 33px/43px "Noto Sans CJK SC", sans-serif; color: #ff1f12; white-space: nowrap; text-spacing-trim: space-all; }
.guide span { font-family: "Noto Sans", sans-serif; }

.robot { position: absolute; right: 29px; top: 924px; width: 76px; height: 76px; }
.robot span { position: absolute; left: 0; right: 0; top: 48px; text-align: center; font-size: 12px; line-height: 18px; font-weight: bold; color: #1f86f5; }
.watermark { position: absolute; right: 15px; top: 960px; font: 17px/24px "Noto Sans", "Noto Sans CJK SC", sans-serif; color: #e8e8e8; text-shadow: 1px 1px 1px #555; }
```
